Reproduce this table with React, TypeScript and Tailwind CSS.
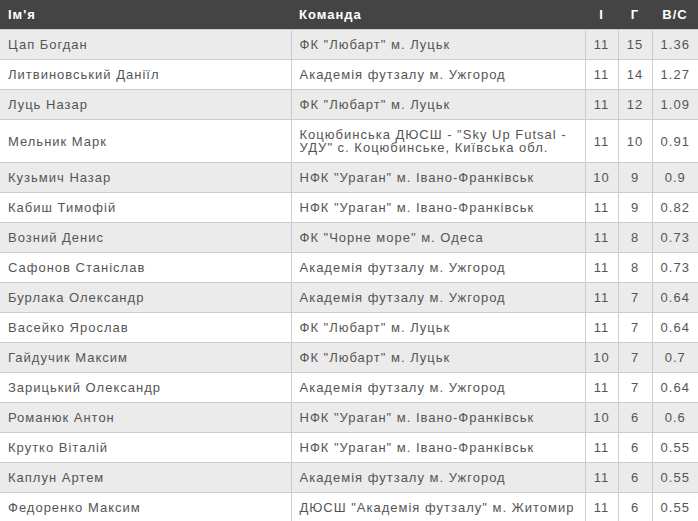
const players = [
  { name: "Цап Богдан", team: 'ФК "Любарт" м. Луцьк', games: 11, goals: 15, avg: "1.36" },
  { name: "Литвиновський Даніїл", team: "Академія футзалу м. Ужгород", games: 11, goals: 14, avg: "1.27" },
  { name: "Луць Назар", team: 'ФК "Любарт" м. Луцьк', games: 11, goals: 12, avg: "1.09" },
  { name: "Мельник Марк", team: 'Коцюбинська ДЮСШ - "Sky Up Futsal - УДУ" с. Коцюбинське, Київська обл.', games: 11, goals: 10, avg: "0.91" },
  { name: "Кузьмич Назар", team: 'НФК "Ураган" м. Івано-Франківськ', games: 10, goals: 9, avg: "0.9" },
  { name: "Кабиш Тимофій", team: 'НФК "Ураган" м. Івано-Франківськ', games: 11, goals: 9, avg: "0.82" },
  { name: "Возний Денис", team: 'ФК "Чорне море" м. Одеса', games: 11, goals: 8, avg: "0.73" },
  { name: "Сафонов Станіслав", team: "Академія футзалу м. Ужгород", games: 11, goals: 8, avg: "0.73" },
  { name: "Бурлака Олександр", team: "Академія футзалу м. Ужгород", games: 11, goals: 7, avg: "0.64" },
  { name: "Васейко Ярослав", team: 'ФК "Любарт" м. Луцьк', games: 11, goals: 7, avg: "0.64" },
  { name: "Гайдучик Максим", team: 'ФК "Любарт" м. Луцьк', games: 10, goals: 7, avg: "0.7" },
  { name: "Зарицький Олександр", team: "Академія футзалу м. Ужгород", games: 11, goals: 7, avg: "0.64" },
  { name: "Романюк Антон", team: 'НФК "Ураган" м. Івано-Франківськ', games: 10, goals: 6, avg: "0.6" },
  { name: "Крутко Віталій", team: 'НФК "Ураган" м. Івано-Франківськ', games: 11, goals: 6, avg: "0.55" },
  { name: "Каплун Артем", team: "Академія футзалу м. Ужгород", games: 11, goals: 6, avg: "0.55" },
  { name: "Федоренко Максим", team: 'ДЮСШ "Академія футзалу" м. Житомир', games: 11, goals: 6, avg: "0.55" },
];

export default function App() {
  return (
    <div className="w-[698px] bg-white font-['Liberation_Sans',Arial,sans-serif] text-[13px] leading-[13px] tracking-[1px]">
      <table className="w-full table-fixed border-collapse">
        <colgroup>
          <col className="w-[291px]" />
          <col className="w-[294px]" />
          <col className="w-[33px]" />
          <col className="w-[34px]" />
          <col className="w-[46px]" />
        </colgroup>
        {/* header */}
        <thead>
          <tr className="bg-[#444444] text-white font-bold">
            <th className="px-2 py-[8px] text-left">Ім'я</th>
            <th className="px-2 py-[8px] text-left">Команда</th>
            <th className="py-[8px] text-center">І</th>
            <th className="py-[8px] text-center">Г</th>
            <th className="py-[8px] text-center">В/С</th>
          </tr>
        </thead>
        <tbody className="text-[#555555]">
          {players.map((p, i) => (
            <tr key={i} className={i % 2 === 0 ? "bg-[#ebebeb]" : "bg-white"}>
              <td className="border border-[#cccccc] border-l-0 px-2 py-[8px]">{p.name}</td>
              <td className="border border-[#cccccc] px-2 py-[8px]">{p.team}</td>
              <td className="border border-[#cccccc] py-[8px] text-center">{p.games}</td>
              <td className="border border-[#cccccc] py-[8px] text-center">{p.goals}</td>
              <td className="border border-[#cccccc] border-r-0 py-[8px] text-center">{p.avg}</td>
            </tr>
          ))}
        </tbody>
      </table>
    </div>
  );
}
